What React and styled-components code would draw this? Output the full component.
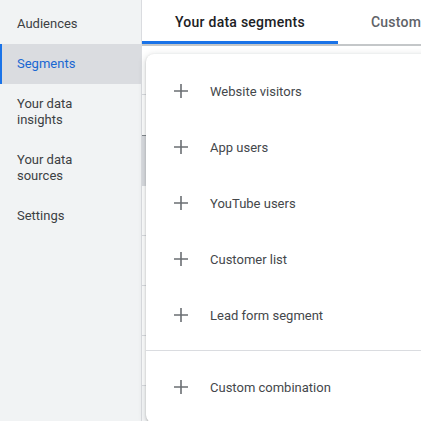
import React from "react";
import styled, { createGlobalStyle } from "styled-components";

const GlobalStyle = createGlobalStyle`
  html, body {
    margin: 0;
    padding: 0;
    overflow: hidden;
    background: #ffffff;
  }
  body {
    font-family: Roboto, "Liberation Sans", Arial, sans-serif;
    -webkit-font-smoothing: antialiased;
  }
`;

const navItems = [
  { label: "Audiences" },
  { label: "Segments", active: true },
  { label: "Your data\ninsights" },
  { label: "Your data\nsources" },
  { label: "Settings" }
];

const segmentTypes = [
  "Website visitors",
  "App users",
  "YouTube users",
  "Customer list",
  "Lead form segment"
];

const tableRows = [
  { height: 49 },
  { height: 41, strong: true },
  { height: 50, shaded: true },
  { height: 50 },
  { height: 50 },
  { height: 50 },
  { height: 50 }
];

const PlusIcon = () => (
  <svg width="16" height="16" viewBox="0 0 16 16" aria-hidden="true">
    <path d="M8 1v14M1 8h14" stroke="#6b6f73" strokeWidth="1.6" fill="none" />
  </svg>
);

const App = () => {
  return (
    <Page>
      <GlobalStyle />
      <Sidebar>
        {navItems.map((item) => (
          <NavItem key={item.label} $active={item.active}>
            {item.label}
          </NavItem>
        ))}
      </Sidebar>
      <Main>
        <TabBar>
          <Tab $active>Your data segments</Tab>
          <Tab>Custom segments</Tab>
        </TabBar>
        <Content>
          <Table>
            {tableRows.map((row, i) => (
              <TableRow
                key={i}
                $height={row.height}
                $strong={row.strong}
                $shaded={row.shaded}
              />
            ))}
          </Table>
          <Menu>
            <MenuGroup $top={9} $bottom={7}>
              {segmentTypes.map((label) => (
                <MenuItem key={label}>
                  <IconSlot>
                    <PlusIcon />
                  </IconSlot>
                  <MenuLabel>{label}</MenuLabel>
                </MenuItem>
              ))}
            </MenuGroup>
            <Divider />
            <MenuGroup $top={8} $bottom={8}>
              <MenuItem>
                <IconSlot>
                  <PlusIcon />
                </IconSlot>
                <MenuLabel>Custom combination</MenuLabel>
              </MenuItem>
            </MenuGroup>
          </Menu>
        </Content>
      </Main>
    </Page>
  );
};

export default App;

const Page = styled.div`
  width: 421px;
  height: 421px;
  display: flex;
  overflow: hidden;
`;

const Sidebar = styled.nav`
  width: 142px;
  flex-shrink: 0;
  background: #f1f3f4;
  border-right: 1px solid #dadce0;
  padding-top: 4px;
  box-sizing: border-box;
`;

const NavItem = styled.div`
  padding: 12px 8px 12px 15px;
  border-left: 2px solid ${(p) => (p.$active ? "#1a73e8" : "transparent")};
  background: ${(p) => (p.$active ? "#dadce0" : "transparent")};
  color: ${(p) => (p.$active ? "#1967d2" : "#3c4043")};
  font-size: 13px;
  line-height: 16px;
  white-space: pre-line;
`;

const Main = styled.div`
  flex: 1;
  display: flex;
  flex-direction: column;
  min-width: 0;
`;

const TabBar = styled.div`
  height: 44px;
  display: flex;
  border-bottom: 2px solid #c4c7c9;
  background: #ffffff;
  white-space: nowrap;
`;

const Tab = styled.div`
  padding: 0 33px;
  display: flex;
  align-items: center;
  font-size: 14px;
  font-weight: 500;
  letter-spacing: 0.25px;
  color: ${(p) => (p.$active ? "#202124" : "#5f6368")};
  box-shadow: ${(p) => (p.$active ? "inset 0 -3px 0 #1a73e8" : "none")};
`;

const Content = styled.div`
  position: relative;
  flex: 1;
  background: #f8f9fa;
`;

const Table = styled.div`
  display: flex;
  flex-direction: column;
`;

const TableRow = styled.div`
  height: ${(p) => p.$height}px;
  box-sizing: border-box;
  border-bottom: 1px solid ${(p) => (p.$strong ? "#80868b" : "#dadce0")};
  background: ${(p) => (p.$shaded ? "#dadce0" : "#ffffff")};
`;

const Menu = styled.div`
  position: absolute;
  left: 4px;
  top: 8px;
  width: 330px;
  background: #ffffff;
  border-radius: 8px;
  box-shadow: 0 1px 2px rgba(60, 64, 67, 0.3), 0 2px 6px 2px rgba(60, 64, 67, 0.15);
`;

const MenuGroup = styled.div`
  padding: ${(p) => p.$top}px 0 ${(p) => p.$bottom}px;
`;

const MenuItem = styled.div`
  height: 56px;
  display: flex;
  align-items: center;
  padding-left: 27px;
`;

const IconSlot = styled.span`
  width: 37px;
  display: flex;
  align-items: center;
`;

const MenuLabel = styled.span`
  font-size: 13px;
  color: #44474b;
`;

const Divider = styled.div`
  height: 1px;
  background: #dadce0;
`;
